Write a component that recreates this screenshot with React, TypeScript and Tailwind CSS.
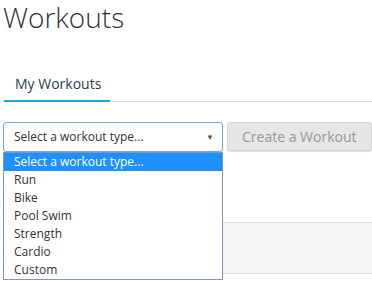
const options = ["Select a workout type...", "Run", "Bike", "Pool Swim", "Strength", "Cardio", "Custom"]

export default function App() {
  return (
    <div className="w-[372px] h-[281px] overflow-hidden bg-white pl-[3px] text-[#333]" style={{ fontFamily: '"Open Sans", sans-serif' }}>
      <h1 className="text-[28px] font-light leading-[34px] text-[#333]">Workouts</h1>

      <div className="mt-[37px] border-b border-[#ddd] ml-[1px]">
        <div className="inline-block w-[106px] pl-[11px] pb-[7px] border-b-2 border-[#1aa3e8] -mb-[1px] text-[14px] leading-[19px] text-[#2c3e50]">
          My Workouts
        </div>
      </div>

      <div className="mt-[20px] flex gap-[4px] relative">
        <div className="relative w-[220px] h-[30px] rounded-[3px] border border-[#7aa2e2] bg-white flex items-center pl-[10px] pr-[8px] text-[12px] text-[#333]">
          <span className="flex-1">Select a workout type...</span>
          <span className="text-[8px] text-[#555]">▼</span>
          <div className="absolute left-[-1px] top-[29px] w-[220px] border border-[#7b96c9] bg-white z-10">
            {options.map((o, i) => (
              <div
                key={o}
                className={
                  "h-[18px] leading-[18px] pl-[10px] text-[12px] " +
                  (i === 0 ? "bg-[#1e90ff] text-white" : "text-[#333]")
                }
              >
                {o}
              </div>
            ))}
          </div>
        </div>
        <button className="h-[29px] whitespace-nowrap rounded-[3px] border border-[#d5d5d5] bg-[#e6e6e6] shadow-[0_1px_1px_rgba(0,0,0,0.12)] px-[14px] text-[14px] text-[#999]">
          Create a Workout
        </button>
      </div>

      <div className="mt-[70px] h-[52px] border-y border-[#ddd] bg-[#f7f7f7]"></div>
    </div>
  )
}
